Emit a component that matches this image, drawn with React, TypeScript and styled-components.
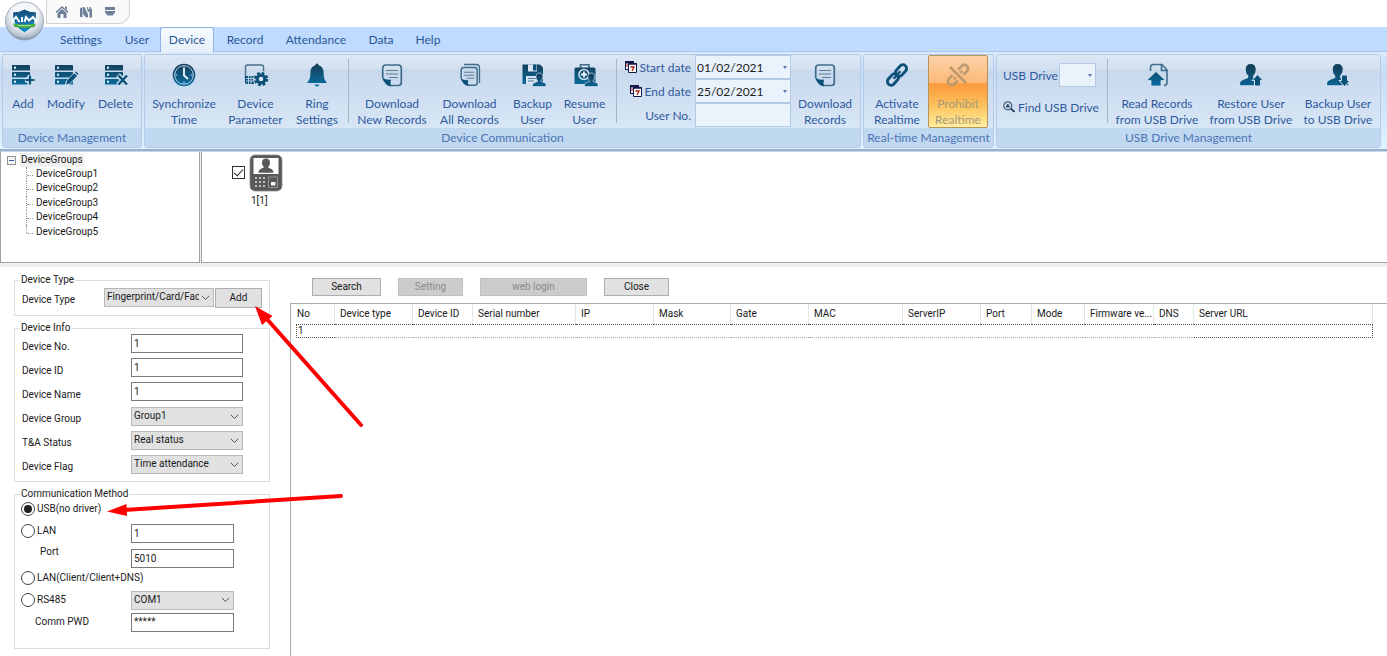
import React, { useState } from 'react';
import styled, { createGlobalStyle, css } from 'styled-components';

const Global = createGlobalStyle`
  * { box-sizing: border-box; }
  html, body { margin: 0; background: #fff; }
  body, input, select, button, table { font-family: Roboto, "Open Sans", sans-serif; }
  body { font-size: 10px; color: #1a1a1a; }
  button { padding: 0; cursor: default; }
`;

const ribbonFont = css`
  font-family: Lato, "Open Sans", sans-serif;
  font-size: 12px;
`;

const Window = styled.div`
  position: relative;
  display: flex;
  flex-direction: column;
  min-height: 100vh;
  overflow: hidden;
`;

/* Title bar and tabs */
const TitleBar = styled.header`
  display: flex;
  height: 27px;
  padding-left: 46px;
  background: #fff;
`;
const Orb = styled.button`
  position: absolute;
  left: 5px;
  top: 0;
  z-index: 2;
  width: 40px;
  height: 42px;
  border: 0;
  background: none;
  svg { display: block; }
`;
const QuickBar = styled.div`
  display: flex;
  align-items: center;
  gap: 10px;
  width: 84px;
  height: 24px;
  padding-left: 8px;
  border: 1px solid #d2d2d2;
  border-top: 0;
  border-radius: 0 0 12px 0;
  background: #fafafa;
`;
const QuickButton = styled.button`
  display: flex;
  width: 14px;
  height: 22px;
  border: 0;
  background: none;
  svg { width: 14px; height: 14px; margin-top: 4px; }
`;
const Tabs = styled.nav`
  display: flex;
  align-items: flex-end;
  height: 25px;
  padding-left: 48px;
  background: #bfdbff;
  border-bottom: 1px solid #a6c6ef;
`;
const Tab = styled.button<{ $active?: boolean; $w: number }>`
  ${ribbonFont}
  width: ${p => p.$w}px;
  height: 24px;
  border: 1px solid transparent;
  border-bottom: 0;
  border-radius: 3px 3px 0 0;
  background: none;
  line-height: 24px;
  color: #2b5797;
  ${p => p.$active && css`
    height: 25px;
    margin-bottom: -1px;
    border-color: #8db2e3;
    background: linear-gradient(#f7fbff, #e6effa);
  `}
`;

/* Ribbon */
const Ribbon = styled.section`
  display: flex;
  gap: 2px;
  height: 99px;
  padding: 2px 5px 2px 2px;
  background: linear-gradient(#dce9f8, #c7dbf3 20%, #d9ebfb 80%, #dff4ff);
  border-bottom: 2px solid #93b3d9;
`;
const Group = styled.section<{ $w: number }>`
  display: flex;
  flex-direction: column;
  flex: none;
  width: ${p => p.$w}px;
  height: 94px;
  border: 1px solid #b3cbe8;
  border-radius: 3px;
  background: linear-gradient(#dde8f4, #d3e0f0 14px, #c8d8ed 15px, #d8e7f6 75px);
`;
const Items = styled.div`
  display: flex;
  flex: 1;
  padding: 0 2px;
`;
const GroupTitle = styled.h2`
  ${ribbonFont}
  margin: 0;
  height: 19px;
  background: #c1d8f1;
  font-weight: 400;
  line-height: 19px;
  text-align: center;
  white-space: nowrap;
  color: #4a75b3;
`;
const Tool = styled.button<{ $w: number; $hot?: boolean }>`
  ${ribbonFont}
  display: flex;
  flex-direction: column;
  align-items: center;
  flex: none;
  width: ${p => p.$w}px;
  height: 73px;
  padding-top: 6px;
  border: 1px solid transparent;
  border-radius: 2px;
  background: none;
  line-height: 16px;
  white-space: pre;
  color: #2f5a9e;
  svg { flex: none; width: 26px; height: 26px; margin-bottom: 8px; }
  ${p => p.$hot && css`
    color: #a89a7c;
    border-color: #b8935a;
    background: linear-gradient(#fcd3a8, #fdb877 38%, #fb9a3c 39%, #fdc25c 70%, #fff0a0);
  `}
`;
const Divider = styled.div`
  flex: none;
  width: 1px;
  height: 64px;
  margin: 4px 4px 0;
  background: #a9b6c6;
`;
const Fields = styled.div`
  display: flex;
  flex-direction: column;
  flex: none;
  width: 170px;
`;
const FieldRow = styled.label`
  ${ribbonFont}
  display: flex;
  align-items: center;
  justify-content: flex-end;
  gap: 3px;
  height: 24px;
  color: #2f5a9e;
  svg { flex: none; }
`;
const FieldBox = styled.span`
  display: flex;
  align-items: center;
  width: 96px;
  height: 24px;
  margin-left: 1px;
  border: 1px solid #b3c9e6;
  background: #eaf2fb;
`;
const FieldInput = styled.input`
  ${ribbonFont}
  flex: 1;
  min-width: 0;
  padding: 0 0 0 1px;
  border: 0;
  outline: 0;
  background: none;
  color: #222;
`;
const Caret = styled.span`
  width: 0;
  margin-right: 3px;
  border: 2px solid transparent;
  border-top: 3px solid #5279b0;
  border-bottom: 0;
`;
const UsbFields = styled.div`
  display: flex;
  flex-direction: column;
  flex: none;
  gap: 8px;
  width: 104px;
  padding: 8px 7px 0 4px;
`;
const UsbRow = styled.label`
  ${ribbonFont}
  display: flex;
  align-items: center;
  justify-content: space-between;
  height: 24px;
  white-space: nowrap;
  color: #2f5a9e;
`;
const DriveSelect = styled.select`
  appearance: none;
  width: 37px;
  height: 24px;
  border: 1px solid #b3c9e6;
  border-radius: 0;
  background: #eaf2fb;
`;
const DriveBox = styled.span`
  display: flex;
  align-items: center;
  ${Caret} { margin-left: -8px; margin-right: 4px; pointer-events: none; }
`;
const LinkButton = styled.button`
  ${ribbonFont}
  display: flex;
  align-items: center;
  gap: 3px;
  height: 24px;
  border: 0;
  background: none;
  white-space: nowrap;
  color: #2f5a9e;
  svg { flex: none; }
`;

/* Device browser */
const Browser = styled.section`
  display: flex;
  gap: 1px;
  height: 112px;
  background: #f0f0f0;
`;
const TreePane = styled.div`
  width: 200px;
  border: 1px solid #a0a0a0;
  border-top-color: #d0d4da;
  background: #fff;
  padding: 1px 6px;
`;
const DevicePane = styled.div`
  flex: 1;
  display: flex;
  align-items: flex-start;
  gap: 4px;
  border: 1px solid #a0a0a0;
  border-right: 0;
  border-top-color: #d0d4da;
  background: #fff;
  padding: 2px 30px;
`;
const TreeRoot = styled.div`
  display: flex;
  align-items: center;
  height: 14px;
  line-height: 14px;
`;
const Expander = styled.button`
  width: 9px;
  height: 9px;
  border: 1px solid #919191;
  background: #f6f6f6;
  &::before { content: ''; display: block; width: 5px; height: 1px; margin: 0 auto; background: #3b5aa0; }
`;
const RootLabel = styled.span`
  margin-left: 4px;
  padding: 0 1px;
  background: #f0f0f0;
`;
const TreeList = styled.ul`
  list-style: none;
  margin: 0 0 0 19px;
  padding: 0;
`;
const TreeItem = styled.li`
  display: flex;
  height: 14px;
  line-height: 14px;
  border-left: 1px dotted #999;
  &:nth-child(even) { height: 15px; }
  &:last-child { height: 8px; }
  &::before { content: ''; width: 6px; height: 8px; margin-right: 3px; border-bottom: 1px dotted #999; }
`;
const CheckBox = styled.input`
  appearance: none;
  display: grid;
  place-items: center;
  width: 13px;
  height: 13px;
  margin: 12px 0 0;
  border: 1px solid #333;
  &:checked::before {
    content: '';
    width: 8px;
    height: 4px;
    border: solid #222;
    border-width: 0 0 1px 1px;
    transform: rotate(-48deg);
    margin-bottom: 3px;
  }
`;
const DeviceCard = styled.label`
  display: flex;
  flex-direction: column;
  line-height: 14px;
  svg { display: block; }
  span { padding: 2px 0 0 2px; }
`;
const Splitter = styled.div`
  height: 4px;
  background: #f0f0f0;
`;

/* Forms */
const Work = styled.main`
  display: flex;
  flex: 1;
`;
const FormPane = styled.form`
  flex: none;
  width: 291px;
  padding: 7px 21px 8px 14px;
`;
const Box = styled.fieldset<{ $h: number }>`
  height: ${p => p.$h}px;
  margin: 0 0 6px;
  padding: 0 7px;
  border: 1px solid #dcdcdc;
`;
const Legend = styled.legend`
  height: 12px;
  margin-left: -2px;
  padding: 0 1px;
  line-height: 12px;
`;
const Row = styled.div`
  display: flex;
  align-items: flex-start;
  height: 24px;
`;
const SelectRow = styled(Row)`
  label { margin-top: -1px; }
  padding-top: 1px;
`;
const Label = styled.label<{ $w?: number }>`
  width: ${p => p.$w ?? 109}px;
  line-height: 26px;
  white-space: nowrap;
`;
const controlBox = css<{ $w?: number }>`
  width: ${p => p.$w ?? 112}px;
  height: 19px;
  margin: 0;
  border-radius: 0;
  font-size: 10px;
  line-height: 14px;
  color: #1a1a1a;
`;
const Input = styled.input<{ $w?: number }>`
  ${controlBox}
  padding: 0 2px 1px;
  border: 1px solid #7a7a7a;
  background: #fff;
`;
const Select = styled.select<{ $w?: number }>`
  ${controlBox}
  appearance: none;
  padding: 0 14px 1px 2px;
  border: 1px solid #b8b8b8;
  background: #e1e1e1;
`;
const SelectBox = styled.span`
  display: flex;
  align-items: center;
  svg { flex: none; margin-left: -13px; margin-right: 4px; pointer-events: none; }
`;
const PushButton = styled.button<{ $w: number; $h?: number }>`
  width: ${p => p.$w}px;
  height: ${p => p.$h ?? 17}px;
  border: 1px solid #adadad;
  background: #e1e1e1;
  font-size: 10px;
  line-height: 14px;
  color: #1a1a1a;
  &:disabled { background: #ccc; border-color: #bfbfbf; color: #8a8a8a; }
`;
const TypeRow = styled(Row)`
  gap: 1px;
  padding-top: 2px;
  label { margin-top: -1px; }
`;
const CommRow = styled.div<{ $h: number; $align?: string }>`
  display: flex;
  align-items: ${p => p.$align ?? 'center'};
  height: ${p => p.$h}px;
`;
const CommLabel = styled.label<{ $indent?: number; $top?: boolean }>`
  display: flex;
  align-items: center;
  align-self: ${p => (p.$top ? 'flex-start' : 'center')};
  gap: 2px;
  width: 110px;
  margin-left: -1px;
  padding-left: ${p => p.$indent ?? 0}px;
  line-height: 18px;
  white-space: nowrap;
`;
const Radio = styled.input`
  appearance: none;
  display: grid;
  place-items: center;
  flex: none;
  width: 14px;
  height: 14px;
  margin: 0;
  border: 1px solid #444;
  border-radius: 50%;
  background: #fff;
  &:checked::before { content: ''; width: 8px; height: 8px; border-radius: 50%; background: #222; }
`;

/* Device list */
const ListPane = styled.section`
  display: flex;
  flex-direction: column;
  flex: 1;
  min-width: 0;
`;
const ButtonRow = styled.div`
  display: flex;
  gap: 17px;
  height: 36px;
  padding: 11px 0 0 21px;
`;
const ListFrame = styled.div`
  flex: 1;
  margin-left: -1px;
  padding-left: 5px;
  border: 1px solid #a9abb3;
  border-width: 1px 0 0 1px;
`;
const Table = styled.table`
  table-layout: fixed;
  width: calc(100% - 14px);
  border-collapse: separate;
  border-spacing: 0;
`;
const Th = styled.th`
  height: 20px;
  padding: 0 0 1px 5px;
  border-right: 1px solid #e5e5e5;
  font-size: 10px;
  font-weight: 400;
  text-align: left;
  white-space: nowrap;
  overflow: hidden;
  &:first-child { padding-left: 1px; }
`;
const Td = styled.td`
  height: 14px;
  padding: 0 1px;
  line-height: 12px;
  border-top: 1px dotted #555;
  border-bottom: 1px dotted #aaa;
  &:first-child { border-left: 1px dotted #555; border-bottom-color: #555; }
  &:last-child { border-right: 1px dotted #555; border-bottom-color: #555; }
`;
const Arrows = styled.svg`
  position: absolute;
  left: 0;
  top: 0;
  pointer-events: none;
`;

/* Icons */
const INK = '#0b5078';
const Svg = ({ children }: { children: React.ReactNode }) => (
  <svg viewBox="0 0 26 26" fill="none">
    <defs>
      <linearGradient id="ink" x1="0" y1="0" x2="0" y2="26" gradientUnits="userSpaceOnUse">
        <stop offset="0.15" stopColor="#14425e" />
        <stop offset="1" stopColor="#0672a8" />
      </linearGradient>
    </defs>
    {children}
  </svg>
);
const Servers = ({ children }: { children: React.ReactNode }) => (
  <Svg>
    {[3, 10, 17].map(y => (
      <g key={y}>
        <rect x="2" y={y} width="18" height="5.5" rx="0.6" fill="url(#ink)" />
        <rect x="4" y={y + 1.7} width="2" height="2" fill="#e8f2fb" />
      </g>
    ))}
    {children}
  </Svg>
);
const AddIcon = () => (
  <Servers>
    <path d="M20 13v10M15 18h10" stroke="#d3e2f2" strokeWidth="5" />
    <path d="M20 13.5v9M15.500 18h9" stroke={INK} strokeWidth="2.200" />
  </Servers>
);
const ModifyIcon = () => (
  <Servers>
    <path d="M11.500 24l1.500-5L22 9.500l4 3.500-9.500 9.500z" fill="#d3e2f2" />
    <path d="M13 22.500l1.200-4 7-7.200 2.800 2.700-7 7.200z" fill={INK} />
    <path d="M22 10.500l1-1 2.600 2.500-1 1z" fill={INK} />
  </Servers>
);
const DeleteIcon = () => (
  <Servers>
    <path d="M15 13l9.500 10M24.500 13L15 23" stroke="#d3e2f2" strokeWidth="5" />
    <path d="M15.500 13.500l8.500 9M24 13.500l-8.500 9" stroke={INK} strokeWidth="2.400" />
  </Servers>
);
const ClockIcon = () => (
  <Svg>
    <circle cx="13" cy="13" r="11.300" fill="url(#ink)" />
    <circle cx="13" cy="13" r="9.300" stroke="#b9d3e6" strokeWidth="1" />
    <path d="M13 6v7.500l4 3.500" stroke="#eef6fc" strokeWidth="1.800" />
    <path d="M13 4.500v2M13 19.500v2M4.500 13h2M19.500 13h2" stroke="#b9d3e6" />
  </Svg>
);
const ParamIcon = () => (
  <Svg>
    <path d="M2.500 16V5q0-2 2-2h14q2 0 2 2v5" stroke="#49708c" strokeWidth="1.400" />
    <path d="M2 14h9v8H4q-2 0-2-2z" fill={INK} />
    <path d="M3 16.500h8M3 19h8M5.500 14v8M8 14v8" stroke="#d3e2f2" strokeWidth="0.800" />
    <circle cx="18" cy="17" r="8" fill="#d3e2f2" />
    <circle cx="18" cy="17" r="6" stroke={INK} strokeWidth="2.500" strokeDasharray="2.700 2.012" />
    <circle cx="18" cy="17" r="3.900" stroke={INK} strokeWidth="3.200" />
  </Svg>
);
const BellIcon = () => (
  <Svg>
    <path d="M13 1.500q1.600 0 1.600 1.800 5 1.500 5 7.200c0 5.500 1 7.500 2.900 9.500v1H3.500v-1c1.900-2 2.900-4 2.900-9.500q0-5.700 5-7.200 0-1.800 1.600-1.800z" fill="url(#ink)" />
    <path d="M10.500 22.500h5q-.5 2-2.500 2t-2.500-2z" fill="#0672a8" />
  </Svg>
);
const PageShape = () => (
  <>
    <path d="M3.700 16V6q0-3 3-3h12.600q3 0 3 3v14.500q0 3-3 3H11" stroke="#3f6d89" strokeWidth="1.700" />
    <path d="M7 8.500h12M7 12h12M10 15.500h9" stroke="#5f7f95" strokeWidth="1.200" />
    <path d="M3 15.500q5 3 9 2-1 3.500 0 6.800Q6 24 3 15.500z" fill={INK} />
  </>
);
const PageIcon = () => <Svg><PageShape /></Svg>;
const PagesIcon = () => (
  <Svg>
    <path d="M7 2.500h12q3.500 0 3.500 3.500v15" stroke="#3f6d89" strokeWidth="1.300" />
    <g transform="translate(1 3) scale(0.86)"><PageShape /></g>
  </Svg>
);
const Person = ({ x, y, s }: { x: number; y: number; s: number }) => (
  <g transform={`translate(${x} ${y}) scale(${s})`}>
    <path d="M10 0c3.500 0 5 2.500 5 5.500 0 2.800-1 4.300-2.300 5.500v1.500c3.500 1.500 7.300 2 7.300 5V20H0v-2.500c0-3 3.800-3.500 7.300-5V11C6 9.800 5 8.300 5 5.500 5 2.500 6.500 0 10 0z" fill="url(#ink)" stroke="#d3e2f2" strokeWidth="1" />
  </g>
);
const DiskUserIcon = () => (
  <Svg>
    <path d="M2.500 2.500H20l3 3V22H2.500z" fill="url(#ink)" />
    <path d="M8 2.500h9v7H8zM6 14h13v8H6z" fill="#d6e4f3" />
    <path d="M13 2.500h3.500v6H13z" fill={INK} />
    <path d="M8 16.500h8M8 19h6" stroke="#537f9b" />
    <Person x={12.500} y={11} s={0.680} />
  </Svg>
);
const CaseUserIcon = () => (
  <Svg>
    <path d="M8.500 6V2.700h8.500V6" stroke="#3f6d89" strokeWidth="1.600" />
    <path d="M4 5.500h18q1.500 0 1.500 1.500v15H2.500V7q0-1.500 1.500-1.500z" fill="url(#ink)" />
    <circle cx="12" cy="12.500" r="5" stroke="#d6e4f3" strokeWidth="1.500" />
    <path d="M12 9.500v6M9 12.500h6" stroke="#eef6fc" strokeWidth="1.800" />
    <Person x={12.500} y={11} s={0.680} />
  </Svg>
);
const LinkIcon = () => (
  <Svg>
    <g transform="rotate(-48 13 13)" strokeWidth="2.900" stroke={INK}>
      <rect x="0.500" y="9.300" width="13" height="7.400" rx="3.700" />
      <rect x="12.500" y="9.300" width="13" height="7.400" rx="3.700" />
      <path d="M8 13h10" strokeWidth="2.400" />
    </g>
  </Svg>
);
const UnlinkIcon = () => (
  <Svg>
    <g transform="rotate(-45 13 13)" stroke="#bf9a70" strokeWidth="2.800">
      <path d="M9 9.300H4a3.700 3.700 0 0 0 0 7.400h5M17 9.300h5a3.700 3.700 0 0 1 0 7.400h-5" />
      <path d="M7 13h3M16 13h3" />
    </g>
    <path d="M5 5l16 16" stroke="#bf9a70" strokeWidth="2.600" />
  </Svg>
);
const ReadIcon = () => (
  <Svg>
    <path d="M6.500 9V5.500q0-3 3-3H18l5 5.500v12.500q0 3-3 3M17.500 3v5.500H23" stroke="#3f6d89" strokeWidth="1.600" />
    <path d="M12 9.500l9.500 9H17V24H7v-5.500H2.500z" fill="url(#ink)" stroke="#d6e4f3" strokeWidth="0.800" />
  </Svg>
);
const UserUpIcon = () => (
  <Svg>
    <Person x={1.500} y={1.500} s={1.120} />
    <path d="M19.500 12.500l5.500 6h-2.500V24h-6v-5.500H14z" fill={INK} stroke="#d6e4f3" />
  </Svg>
);
const UserDownIcon = () => (
  <Svg>
    <Person x={1.500} y={1.500} s={1.120} />
    <path d="M19.500 24.500l5.500-6h-2.500V13h-6v5.500H14z" fill={INK} stroke="#d6e4f3" />
  </Svg>
);
const CalendarIcon = () => (
  <svg width="12" height="12" viewBox="0 0 12 12">
    <path d="M0 0h9v9H0z" fill="#15154a" />
    <path d="M1 2.500h2V8H1zM4 2.500h8V12H3V3z" fill="#fff" />
    <path d="M3.500 2.500h8v9h-8z" fill="#fff" stroke="#15154a" />
    <path d="M3.500 3h8" stroke="#15154a" strokeWidth="1.500" />
    <path d="M5.500 6h3.500L7 10" stroke="#b01818" strokeWidth="1.300" fill="none" />
    <path d="M2 3v3" stroke="#b01818" />
  </svg>
);
const FindIcon = () => (
  <svg width="12" height="12" viewBox="0 0 12 12" fill="none">
    <circle cx="4.800" cy="4.800" r="4" stroke="#3f5f78" strokeWidth="1.200" />
    <path d="M3 6.500V4.500h1V3h1.600v1.500h1v2z" fill="#2c4a66" />
    <path d="M7.800 7.800l3.700 3" stroke="#22445f" strokeWidth="1.900" />
  </svg>
);
const Chevron = () => (
  <svg width="9" height="6" viewBox="0 0 9 6" fill="none">
    <path d="M0.800 0.800l3.700 3.700L8.200 0.800" stroke="#555" />
  </svg>
);
const DeviceIcon = () => (
  <svg width="34" height="38" viewBox="0 0 34 38">
    <rect x="1" y="1" width="32" height="36" rx="5" fill="#595959" stroke="#8a8a8a" strokeWidth="0.800" />
    <rect x="4.500" y="4" width="25" height="16" fill="#fff" />
    <path d="M17 4.500c2.800 0 4 1.900 4 4.200 0 2-.7 3.200-1.700 4v1c2.500 1 5.200 1.500 5.200 5H9.500c0-3.500 2.700-4 5.200-5v-1c-1-.8-1.700-2-1.700-4 0-2.300 1.200-4.200 4-4.200z" fill="#595959" />
    {[23, 27, 31].map(y => [6, 10, 14].map(x => <rect key={`${x}${y}`} x={x} y={y} width="2" height="2" fill="#bdbdbd" />))}
    <rect x="19.500" y="23" width="9" height="10.500" fill="none" stroke="#a0a0a0" strokeWidth="0.800" />
    <rect x="22" y="28" width="4.500" height="3.500" fill="#f4f4f4" />
  </svg>
);
const OrbLogo = () => (
  <svg width="40" height="42" viewBox="0 0 40 42">
    <defs>
      <radialGradient id="orb" cx="50%" cy="35%" r="65%">
        <stop offset="0.500" stopColor="#f4f7fb" />
        <stop offset="0.850" stopColor="#b9c3d1" />
        <stop offset="1" stopColor="#7d8ca0" />
      </radialGradient>
      <linearGradient id="shield" x1="0" y1="0" x2="0" y2="1">
        <stop offset="0" stopColor="#124a78" />
        <stop offset="1" stopColor="#1b8fd0" />
      </linearGradient>
    </defs>
    <circle cx="19.500" cy="21" r="19" fill="url(#orb)" stroke="#8995a6" strokeWidth="0.700" />
    <path d="M19.500 9q5 3 12 3 1 14-12 21Q6.500 26 7.500 12q7 0 12-3z" fill="url(#shield)" stroke="#fff" />
    <path d="M7 22l4-5 3.500 5M17 22v-5M19.500 22l1.500-5 3 3.500 4-3.500 3.500 5" fill="none" stroke="#fff" strokeWidth="2" />
    <path d="M8 23.500q11.500 2 23 0l-1.500 3.500q-10 2-20 0z" fill="#4fae42" />
    <path d="M13 25.500h13" stroke="#b9e8a8" strokeWidth="0.800" />
  </svg>
);

type ToolSpec = { label: string; w: number; icon: React.ReactNode; hot?: boolean };
const Tools = ({ items }: { items: ToolSpec[] }) => (
  <>
    {items.map(t => (
      <Tool key={t.label} type="button" $w={t.w} $hot={t.hot} disabled={t.hot}>
        {t.icon}
        {t.label}
      </Tool>
    ))}
  </>
);

const manage: ToolSpec[] = [
  { label: 'Add', w: 36, icon: <AddIcon /> },
  { label: 'Modify', w: 50, icon: <ModifyIcon /> },
  { label: 'Delete', w: 49, icon: <DeleteIcon /> },
];
const timeTools: ToolSpec[] = [
  { label: 'Synchronize\nTime', w: 74, icon: <ClockIcon /> },
  { label: 'Device\nParameter', w: 69, icon: <ParamIcon /> },
  { label: 'Ring\nSettings', w: 54, icon: <BellIcon /> },
];
const recordTools: ToolSpec[] = [
  { label: 'Download\nNew Records', w: 78, icon: <PageIcon /> },
  { label: 'Download\nAll Records', w: 77, icon: <PagesIcon /> },
  { label: 'Backup\nUser', w: 49, icon: <DiskUserIcon /> },
  { label: 'Resume\nUser', w: 55, icon: <CaseUserIcon /> },
];
const usbTools: ToolSpec[] = [
  { label: 'Read Records\nfrom USB Drive', w: 90, icon: <ReadIcon /> },
  { label: 'Restore User\nfrom USB Drive', w: 98, icon: <UserUpIcon /> },
  { label: 'Backup User\nto USB Drive', w: 76, icon: <UserDownIcon /> },
];
const tabs: [string, number][] = [
  ['Settings', 66], ['User', 46], ['Device', 54], ['Record', 62],
  ['Attendance', 80], ['Data', 50], ['Help', 44],
];
const columns: [string, number | undefined][] = [
  ['No', 39], ['Device type', 78], ['Device ID', 60], ['Serial number', 103], ['IP', 78],
  ['Mask', 77], ['Gate', 78], ['MAC', 94], ['ServerIP', 78], ['Port', 51], ['Mode', 53],
  ['Firmware ve...', 69], ['DNS', 40], ['Server URL', undefined],
];

const Dropdown = ({ id, value, w }: { id: string; value: string; w?: number }) => (
  <SelectBox>
    <Select id={id} $w={w} defaultValue={value}><option>{value}</option></Select>
    <Chevron />
  </SelectBox>
);

export default function App() {
  const [method, setMethod] = useState('usb');
  const [tab, setTab] = useState('Device');
  const radio = (id: string) => (
    <Radio type="radio" name="method" id={id} checked={method === id} onChange={() => setMethod(id)} />
  );

  return (
    <Window>
      <Global />
      <Orb type="button" aria-label="Application menu"><OrbLogo /></Orb>
      <TitleBar>
        <QuickBar>
          <QuickButton type="button" aria-label="Home">
            <svg viewBox="0 0 14 14" fill="#6d7f99"><path d="M7 1l6.500 6-1 1L7 3 1.500 8l-1-1zM10 1.500h2V5l-2-2zM2.500 8L7 4l4.500 4v5h-3V9h-3v4h-3z" /></svg>
          </QuickButton>
          <QuickButton type="button" aria-label="Tools">
            <svg viewBox="0 0 14 14" fill="#6d7f99"><path d="M1 3.500l2.500-1.500v10H1zM4 2h1.500l2 4.500L9 9v3.500L6.500 12 4 9zM10.500 6L13 3v9.500h-2.500z" /><path d="M8 2h1v2h1V2h1.500v3L10 7 8.500 6z" /></svg>
          </QuickButton>
          <QuickButton type="button" aria-label="Customize">
            <svg viewBox="0 0 14 14" fill="#6d7f99"><path d="M2 2h10v3H2zM2 6h10v1.500L9.500 10.500h-5L2 7.500z" /></svg>
          </QuickButton>
        </QuickBar>
      </TitleBar>
      <Tabs>
        {tabs.map(([name, w]) => (
          <Tab key={name} type="button" $w={w} $active={name === tab} onClick={() => setTab(name)}>{name}</Tab>
        ))}
      </Tabs>

      <Ribbon>
        <Group $w={140}>
          <Items><Tools items={manage} /></Items>
          <GroupTitle>Device Management</GroupTitle>
        </Group>
        <Group $w={717}>
          <Items>
            <Tools items={timeTools} />
            <Divider />
            <Tools items={recordTools} />
            <Divider />
            <Fields>
              <FieldRow>
                <CalendarIcon />Start date
                <FieldBox><FieldInput defaultValue="01/02/2021" /><Caret /></FieldBox>
              </FieldRow>
              <FieldRow>
                <CalendarIcon />End date
                <FieldBox><FieldInput defaultValue="25/02/2021" /><Caret /></FieldBox>
              </FieldRow>
              <FieldRow>
                User No.
                <FieldBox><FieldInput /></FieldBox>
              </FieldRow>
            </Fields>
            <Tools items={[{ label: 'Download\nRecords', w: 68, icon: <PageIcon /> }]} />
          </Items>
          <GroupTitle>Device Communication</GroupTitle>
        </Group>
        <Group $w={131}>
          <Items>
            <Tools items={[
              { label: 'Activate\nRealtime', w: 62, icon: <LinkIcon /> },
              { label: 'Prohibit\nRealtime', w: 60, icon: <UnlinkIcon />, hot: true },
            ]} />
          </Items>
          <GroupTitle>Real-time Management</GroupTitle>
        </Group>
        <Group $w={385}>
          <Items>
            <UsbFields>
              <UsbRow>
                USB Drive
                <DriveBox><DriveSelect /><Caret /></DriveBox>
              </UsbRow>
              <LinkButton type="button"><FindIcon />Find USB Drive</LinkButton>
            </UsbFields>
            <Divider />
            <Tools items={usbTools} />
          </Items>
          <GroupTitle>USB Drive Management</GroupTitle>
        </Group>
      </Ribbon>

      <Browser>
        <TreePane>
          <TreeRoot><Expander type="button" aria-label="Collapse" /><RootLabel>DeviceGroups</RootLabel></TreeRoot>
          <TreeList>
            {[1, 2, 3, 4, 5].map(n => <TreeItem key={n}>DeviceGroup{n}</TreeItem>)}
          </TreeList>
        </TreePane>
        <DevicePane>
          <CheckBox type="checkbox" id="device-1" defaultChecked />
          <DeviceCard htmlFor="device-1"><DeviceIcon /><span>1[1]</span></DeviceCard>
        </DevicePane>
      </Browser>
      <Splitter />

      <Work>
        <FormPane>
          <Box $h={42}>
            <Legend>Device Type</Legend>
            <TypeRow>
              <Label htmlFor="type" $w={81}>Device Type</Label>
              <Dropdown id="type" value="Fingerprint/Card/Fac" w={110} />
              <PushButton type="button" $w={47} $h={20}>Add</PushButton>
            </TypeRow>
          </Box>
          <Box $h={160}>
            <Legend>Device Info</Legend>
            {[['no', 'Device No.'], ['id', 'Device ID'], ['name', 'Device Name']].map(([id, text]) => (
              <Row key={id}><Label htmlFor={id}>{text}</Label><Input id={id} defaultValue="1" /></Row>
            ))}
            {[['group', 'Device Group', 'Group1'], ['status', 'T&A Status', 'Real status'], ['flag', 'Device Flag', 'Time attendance']].map(([id, text, value]) => (
              <SelectRow key={id}><Label htmlFor={id}>{text}</Label><Dropdown id={id} value={value} /></SelectRow>
            ))}
          </Box>
          <Box $h={161}>
            <Legend>Communication Method</Legend>
            <CommRow $h={18}><CommLabel htmlFor="usb">{radio('usb')}USB(no driver)</CommLabel></CommRow>
            <CommRow $h={25} $align="flex-end">
              <CommLabel htmlFor="lan">{radio('lan')}LAN</CommLabel>
              <Input $w={103} aria-label="LAN address" defaultValue="1" />
            </CommRow>
            <CommRow $h={25} $align="flex-end">
              <CommLabel htmlFor="port" $indent={19} $top>Port</CommLabel>
              <Input $w={103} id="port" defaultValue="5010" />
            </CommRow>
            <CommRow $h={20}><CommLabel htmlFor="client">{radio('client')}LAN(Client/Client+DNS)</CommLabel></CommRow>
            <CommRow $h={24}>
              <CommLabel htmlFor="rs485">{radio('rs485')}RS485</CommLabel>
              <Dropdown id="com" value="COM1" w={103} />
            </CommRow>
            <CommRow $h={20}>
              <CommLabel htmlFor="pwd" $indent={14}>Comm PWD</CommLabel>
              <Input $w={103} id="pwd" defaultValue="*****" />
            </CommRow>
          </Box>
        </FormPane>
        <ListPane>
          <ButtonRow>
            <PushButton type="button" $w={69} $h={18}>Search</PushButton>
            <PushButton type="button" $w={65} $h={18} disabled>Setting</PushButton>
            <PushButton type="button" $w={107} $h={18} disabled>web login</PushButton>
            <PushButton type="button" $w={65} $h={18}>Close</PushButton>
          </ButtonRow>
          <ListFrame>
            <Table>
              <colgroup>{columns.map(([name, w]) => <col key={name} width={w} />)}</colgroup>
              <thead><tr>{columns.map(([name]) => <Th key={name}>{name}</Th>)}</tr></thead>
              <tbody><tr>{columns.map(([name], i) => <Td key={name}>{i === 0 ? '1' : ''}</Td>)}</tr></tbody>
            </Table>
          </ListFrame>
        </ListPane>
      </Work>

      <Arrows width="380" height="540" viewBox="0 0 380 540" aria-hidden="true">
        <path d="M361 425L266 318M341 496L124 510" stroke="#fe0000" strokeWidth="4" strokeLinecap="round" />
        <path d="M255 306l17.500 10-10.500 9zM107 511.500l19.500-7.500.5 12z" fill="#fe0000" />
      </Arrows>
    </Window>
  );
}
